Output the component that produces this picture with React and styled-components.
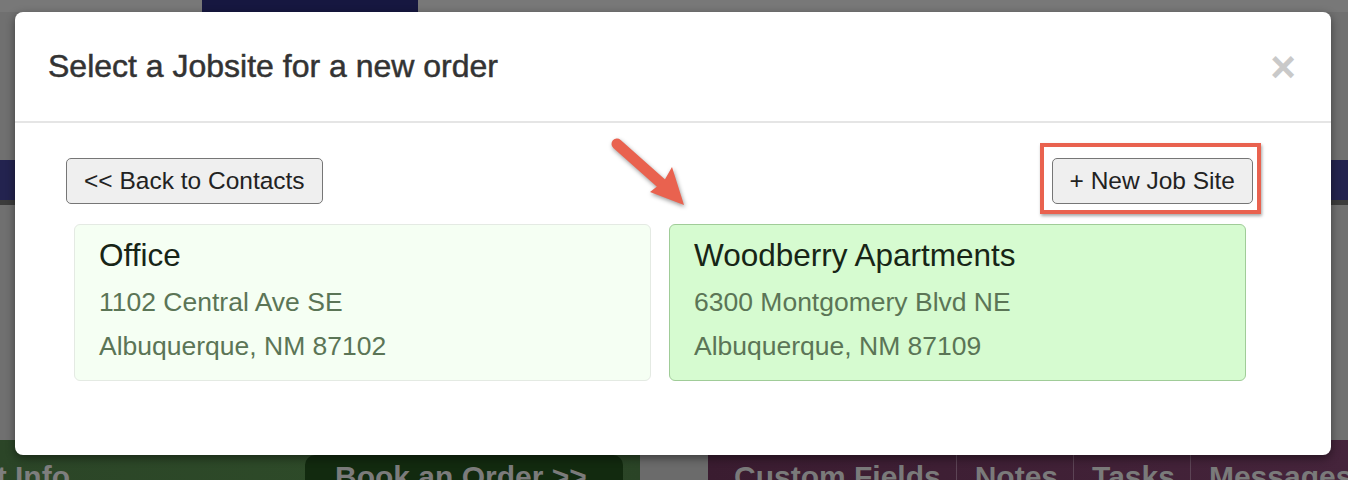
import React from "react";
import styled, { createGlobalStyle } from "styled-components";

const GlobalStyle = createGlobalStyle`
  html, body {
    margin: 0;
    padding: 0;
    background: #6f6f6f;
  }
  body {
    font-family: "Liberation Sans", Arial, Helvetica, sans-serif;
  }
`;

const jobsites = [
  { name: "Office", street: "1102 Central Ave SE", city: "Albuquerque, NM 87102" },
  { name: "Woodberry Apartments", street: "6300 Montgomery Blvd NE", city: "Albuquerque, NM 87109", selected: true },
];

const tabs = ["Custom Fields", "Notes", "Tasks", "Messages"];

const App = () => {
  return (
    <>
      <GlobalStyle />
      <Backdrop>
        <PageTop>
          <NavTab />
        </PageTop>
        <PageBand />
        <PageBottom>
          <GreenPanel>
            <PanelLabel>Contact Info</PanelLabel>
            <BookButton>Book an Order &gt;&gt;</BookButton>
          </GreenPanel>
          <GapPanel />
          <TabBar>
            {tabs.map((t) => (
              <Tab key={t}>{t}</Tab>
            ))}
          </TabBar>
        </PageBottom>

        <Modal>
          <Header>
            <Title>Select a Jobsite for a new order</Title>
            <Close>×</Close>
          </Header>
          <Body>
            <Toolbar>
              <Button>&lt;&lt; Back to Contacts</Button>
              <Highlight>
                <Button>+ New Job Site</Button>
              </Highlight>
            </Toolbar>
            <Cards>
              {jobsites.map((site) => (
                <Card key={site.name} $selected={site.selected}>
                  <CardTitle>{site.name}</CardTitle>
                  <Line>{site.street}</Line>
                  <Line>{site.city}</Line>
                </Card>
              ))}
            </Cards>
          </Body>
          <Arrow viewBox="0 0 95 85" width="95" height="85">
            <line x1="17" y1="13" x2="62" y2="53" stroke="#e9624f" strokeWidth="11" strokeLinecap="round" />
            <polygon points="84,74 72,36 64,50 50,61" fill="#e9624f" />
          </Arrow>
        </Modal>
      </Backdrop>
    </>
  );
};

export default App;

const Backdrop = styled.div`
  position: relative;
  width: 1348px;
  height: 480px;
  overflow: hidden;
  background: #707070;
`;

const PageTop = styled.div`
  height: 12px;
  padding-left: 202px;
  background: #787878;
`;

const NavTab = styled.div`
  width: 216px;
  height: 12px;
  background: #161740;
`;

const PageBand = styled.div`
  margin-top: 148px;
  height: 40px;
  background: #23234f;
  border-bottom: 5px solid #3c3c3c;
`;

const PageBottom = styled.div`
  margin-top: 235px;
  height: 40px;
  display: flex;
`;

const GreenPanel = styled.div`
  flex: 0 0 640px;
  display: flex;
  align-items: flex-start;
  background: linear-gradient(90deg, #2b4527 0%, #2e4b29 60%, #2a4426 100%);
  overflow: hidden;
`;

const PanelLabel = styled.div`
  margin: 20px 0 0 -105px;
  font: bold 30px "Liberation Sans", Arial, sans-serif;
  color: #7e7e7e;
  white-space: nowrap;
`;

const BookButton = styled.div`
  margin: 15px 17px 0 auto;
  flex: 0 0 318px;
  height: 40px;
  box-sizing: border-box;
  padding: 5px 0 0 30px;
  background: #122a0f;
  border-radius: 10px 10px 0 0;
  font: bold 30px "Liberation Sans", Arial, sans-serif;
  color: #7b7b7b;
  white-space: nowrap;
  overflow: hidden;
`;

const GapPanel = styled.div`
  flex: 0 0 68px;
  background: #6b6b6b;
`;

const TabBar = styled.div`
  flex: 1;
  min-width: 0;
  display: flex;
  overflow: hidden;
  background: linear-gradient(90deg, #3a1c30 0%, #45243b 100%);
`;

const Tab = styled.div`
  flex-shrink: 0;
  padding: 20px 15px 0 18px;
  font: bold 30px "Liberation Sans", Arial, sans-serif;
  color: #7a7a7a;
  white-space: nowrap;
  border-right: 1.5px solid #5c4455;
  &:first-child {
    padding-left: 26px;
  }
`;

const Modal = styled.div`
  position: absolute;
  top: 12px;
  left: 15px;
  width: 1316px;
  height: 443px;
  background: #fff;
  border-radius: 8px;
  box-shadow: 0 3px 10px rgba(0, 0, 0, 0.45);
`;

const Header = styled.div`
  height: 111px;
  box-sizing: border-box;
  padding: 0 35px 0 33px;
  display: flex;
  align-items: center;
  justify-content: space-between;
  border-bottom: 2px solid #e5e5e5;
`;

const Title = styled.h4`
  margin: 0;
  font-size: 32px;
  font-weight: 400;
  color: #333;
  -webkit-text-stroke: 0.5px #333;
`;

const Close = styled.span`
  font: bold 44px "Liberation Sans", Arial, sans-serif;
  color: #c9c9c9;
  line-height: 1;
`;

const Body = styled.div`
  padding: 35px 78px 0 51px;
`;

const Toolbar = styled.div`
  display: flex;
  justify-content: space-between;
  align-items: center;
`;

const Button = styled.button`
  height: 46px;
  padding: 0 17px;
  font: 24.5px "Liberation Sans", Arial, sans-serif;
  color: #222;
  background: #efefef;
  border: 1.5px solid #767676;
  border-radius: 5px;
`;

const Highlight = styled.span`
  position: relative;
  display: inline-flex;
  &::after {
    content: "";
    position: absolute;
    top: -15px;
    bottom: -10px;
    left: -12px;
    right: -8px;
    border: 4px solid #e9624f;
    box-shadow: 1px 2px 3px rgba(0, 0, 0, 0.35);
    pointer-events: none;
  }
`;

const Cards = styled.div`
  margin: 20px 7px 0 8px;
  display: grid;
  grid-template-columns: 1fr 1fr;
  gap: 18px;
`;

const Card = styled.div`
  padding: 12px 24px 12px;
  border: 1.5px solid ${(p) => (p.$selected ? "#a0cc98" : "#e4eae3")};
  border-radius: 6px;
  background: ${(p) => (p.$selected ? "#d6fbd0" : "#f5fff3")};
`;

const CardTitle = styled.div`
  font-size: 31.5px;
  line-height: 36px;
  color: #172516;
  margin-bottom: 7px;
`;

const Line = styled.div`
  font-size: 26.5px;
  line-height: 44px;
  color: #5b7556;
`;

const Arrow = styled.svg`
  position: absolute;
  left: 585px;
  top: 119px;
  filter: drop-shadow(1px 2px 2px rgba(0, 0, 0, 0.4));
`;
